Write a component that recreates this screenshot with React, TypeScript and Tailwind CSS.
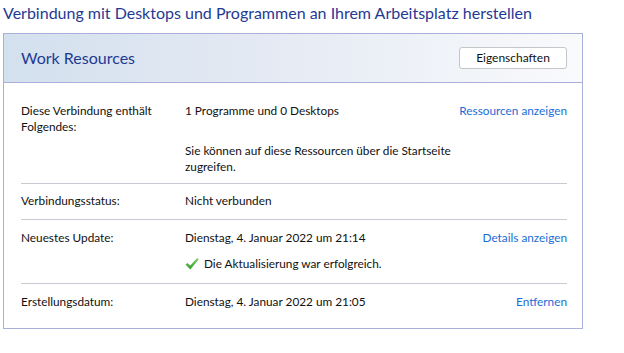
import React from 'react';

const font = { fontFamily: 'Lato, "Liberation Sans", Arial, sans-serif' };

const CheckIcon = () => (
  <svg width="14" height="14" viewBox="0 0 14 14" className="shrink-0">
    <defs>
      <linearGradient id="chk" x1="0" y1="0" x2="0" y2="1">
        <stop offset="0" stopColor="#7fd36a" />
        <stop offset="1" stopColor="#2f9a2a" />
      </linearGradient>
    </defs>
    <path d="M0.5 7.6 L2.4 5.9 L5.2 8.6 L12.2 1 L13.6 2.4 L5.3 12.6 Z" fill="url(#chk)" />
  </svg>
);

export default function App() {
  return (
    <div className="w-[624px] h-[353px] bg-white text-[11.8px] leading-[16px] text-[#111]" style={font}>
      <div className="pl-[3px] pt-[3px] h-[33px] text-[16px] leading-[20px] text-[#1f3a93] whitespace-nowrap">
        Verbindung mit Desktops und Programmen an Ihrem Arbeitsplatz herstellen
      </div>

      <div className="ml-[3px] w-[580px] border border-[#a9b1da]">
        {/* Header */}
        <div className="h-[49px] flex items-center justify-between pl-[17px] pr-[15px] border-b border-[#a9b1da] bg-gradient-to-r from-[#d3e0ee] via-[#e6ebf4] to-[#f9fafc]">
          <span className="text-[16px] leading-[22px] text-[#1f3a93]">Work Resources</span>
          <button className="w-[108px] h-[22px] rounded-[3px] border border-[#c6c6c6] bg-white text-[12px] text-[#111]">
            Eigenschaften
          </button>
        </div>

        {/* Body */}
        <div className="pl-[17px] pr-[15px] pt-[20px] pb-[18px]">
          <div className="flex pb-[8px] border-b border-[#c9c9d1]">
            <div className="w-[164px] shrink-0">
              Diese Verbindung enthält
              <br />
              Folgendes:
            </div>
            <div className="flex-1 min-w-0">
              <div>1 Programme und 0 Desktops</div>
              <div className="mt-[24px] max-w-[275px]">
                Sie können auf diese Ressourcen über die Startseite zugreifen.
              </div>
            </div>
            <a className="text-[#1a6dd6] whitespace-nowrap">Ressourcen anzeigen</a>
          </div>

          <div className="flex pt-[9px] pb-[10px] border-b border-[#c9c9d1]">
            <div className="w-[164px] shrink-0">Verbindungsstatus:</div>
            <div className="flex-1">Nicht verbunden</div>
          </div>

          <div className="flex pt-[10px] pb-[11px] border-b border-[#c9c9d1]">
            <div className="w-[164px] shrink-0">Neuestes Update:</div>
            <div className="flex-1">
              <div>Dienstag, 4. Januar 2022 um 21:14</div>
              <div className="mt-[10px] flex items-center gap-[5px]">
                <CheckIcon />
                <span>Die Aktualisierung war erfolgreich.</span>
              </div>
            </div>
            <a className="text-[#1a6dd6] whitespace-nowrap">Details anzeigen</a>
          </div>

          <div className="flex pt-[10px]">
            <div className="w-[164px] shrink-0">Erstellungsdatum:</div>
            <div className="flex-1">Dienstag, 4. Januar 2022 um 21:05</div>
            <a className="text-[#1a6dd6] whitespace-nowrap">Entfernen</a>
          </div>
        </div>
      </div>
    </div>
  );
}
